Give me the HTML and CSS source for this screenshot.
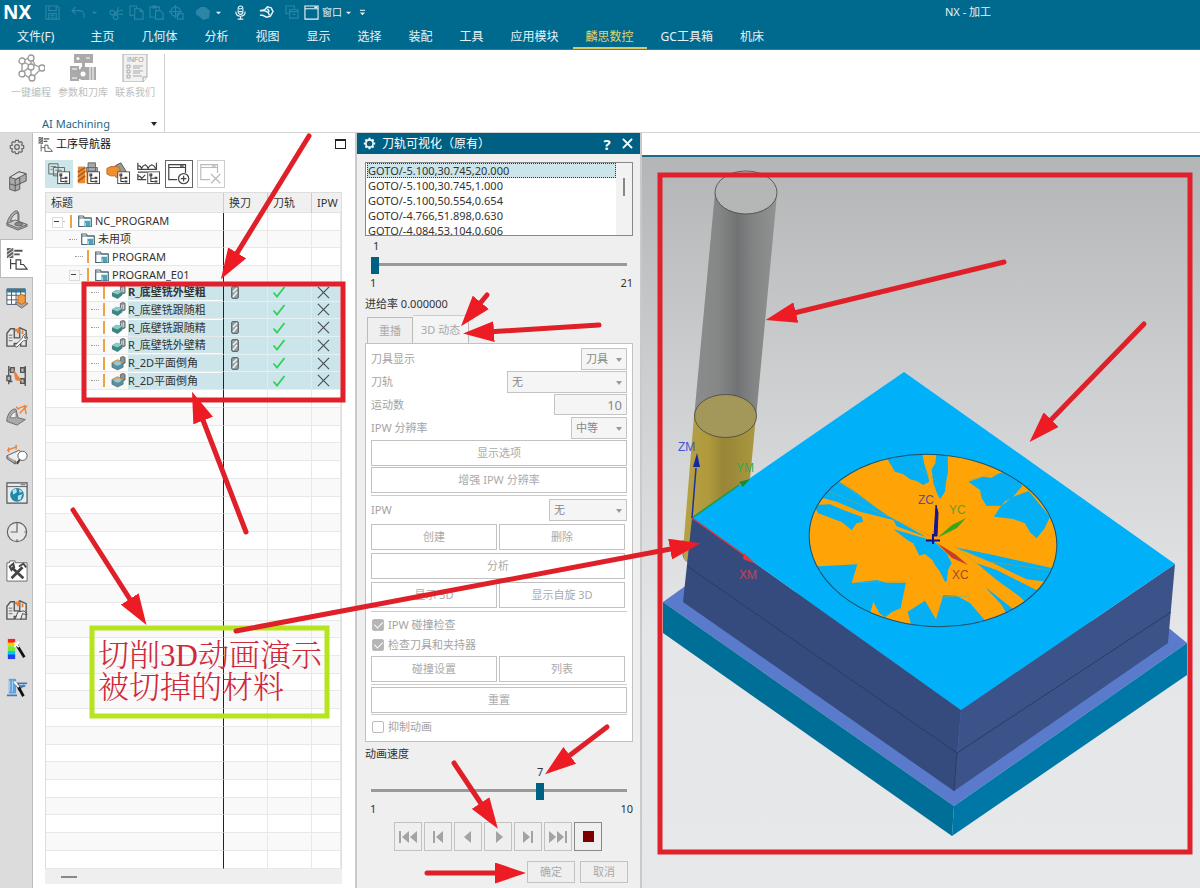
FILE: index.html
```html
<!DOCTYPE html>
<html lang="zh-CN">
<head>
<meta charset="utf-8">
<title>NX - 加工</title>
<link rel="stylesheet" href="styles.css">
</head>
<body>
<svg class="defs" aria-hidden="true">
  <symbol id="folder" viewBox="0 0 14 14"><path d="M.7 12.500V2h4.500l1.500 2h6.600v8.500z" fill="#fff" stroke="#4d6675" stroke-width="1.200"/><path d="M1 4h12" stroke="#4d6675"/><path d="M6 6.500h7v6H6z" fill="#8fd3df"/><path d="M7 8h5M8 10h4M8 12h4" stroke="#1b6d83"/></symbol>
  <symbol id="mill" viewBox="0 0 16 16"><path d="M10 1.500l3-1 2 1v7l-3 1-2-1z" fill="#8b9297" stroke="#4c555a" stroke-width=".8"/><path d="M11.500 3v5M13.500 2.500v5" stroke="#dde"/><path d="M1 8l5-3 6 2v4l-5 4-6-3z" fill="#3e8582"/><path d="M1 8l5-3 6 2-5 3z" fill="#8ccac3"/></symbol>
  <symbol id="chamfer" viewBox="0 0 16 16"><path d="M10 1.500l3-1 2 1v6l-3 1-2-1z" fill="#8b9297" stroke="#4c555a" stroke-width=".8"/><path d="M1 7l6-3 6 3v5l-6 3-6-3z" fill="#5a8e9e" stroke="#47606a" stroke-width=".6"/><path d="M1 7l6-3 6 3-6 3z" fill="#e7a05a"/><ellipse cx="7" cy="8" rx="3.500" ry="2" fill="#84d0df"/></symbol>
  <symbol id="tool" viewBox="0 0 8 13"><rect x=".7" y=".7" width="6.600" height="11.600" rx="1" fill="#9aa4a7" stroke="#4d5659"/><path d="M2 6l4-4M2 11l4-5" stroke="#f4f4f4" stroke-width="1.500"/></symbol>
  <symbol id="tick" viewBox="0 0 14 12"><path d="M1.500 6.500l3.500 4L12.500 1" fill="none" stroke="#2fd158" stroke-width="1.800"/></symbol>
  <symbol id="cross" viewBox="0 0 14 14"><path d="M1 1l12 12M13 1L1 13" stroke="#4a5256" stroke-width="1.300"/></symbol>
  <symbol id="tree" viewBox="0 0 14 14"><rect x=".6" y=".6" width="12.800" height="12.800" fill="#fff" stroke="#333"/><path d="M3 3h2v2H3zM4 5v6h4M4 7.500h4" fill="none" stroke="#333" stroke-width="1.100"/><path d="M8 6h3v2.500H8zM8 10h3v2.200H8z" fill="#444"/></symbol>
  <symbol id="opnav" viewBox="0 0 24 24"><path d="M1 0h7v11H1z" fill="#666"/><path d="M1 4l6-4M1 8l7-5M2 11l6-4" stroke="#eee"/><path d="M9 2h9v2H9zM9 6h6v2H9z" fill="#555"/><path d="M5 12v11M5 17h6M11 23v-10h5v5h3l4 5z" fill="#fff" stroke="#444" stroke-width="1.300"/></symbol>
  <symbol id="machine" viewBox="0 0 24 24"><path d="M1 22V8l4-5h4v10h6V2l7 3v17h-6v-3H9v3z" fill="#e8e8e8" stroke="#555" stroke-width="1.500"/><path d="M3 10h4M3 13h4M3 16h4" stroke="#666"/><path d="M10 3h2v3h-2zM13 2h2v6h-3V5zM17 5h2v4h-2z" fill="#e77c32"/></symbol>
</svg>

<div class="app">
  <header class="top">
    <div class="titlebar">
      <strong class="logo">NX</strong>
      <div class="quick">
        <button class="q dim" aria-label="保存"><svg viewBox="0 0 16 16"><path d="M1 1h12l2 2v12H1zM4 1v5h8V1M4 15V9h8v6M6 11h4M6 13h4"/></svg></button>
        <button class="q dim gap" aria-label="撤消"><svg viewBox="0 0 16 16"><path d="M5 2L1 6l4 4M1 6h8q6 0 5 8"/></svg></button>
        <button class="q tri dim" aria-label="撤消选项"><svg viewBox="0 0 8 8"><path class="f" d="M1 3h6L4 6z"/></svg></button>
        <button class="q dim gap" aria-label="剪切"><svg viewBox="0 0 16 16"><circle cx="3.500" cy="8" r="2.500"/><circle cx="7" cy="13" r="2.500"/><path d="M6 8l9-3M8 11L10 2M6 9l9 1"/></svg></button>
        <button class="q dim" aria-label="复制"><svg viewBox="0 0 16 16"><path d="M5 11H1V1h7v3M6 4h6l3 3v8H6zM12 4v3h3"/></svg></button>
        <button class="q dim" aria-label="粘贴"><svg viewBox="0 0 16 16"><path d="M6 13H1V2h10v3M4 1h4v2H4zM7 6h5l3 3v6H7z"/></svg></button>
        <button class="q dim" aria-label="特征"><svg viewBox="0 0 16 16"><circle cx="7" cy="7" r="5"/><path d="M7 0v14M0 7h14M9 9h6v6H9z"/></svg></button>
        <button class="q dim gap" aria-label="渲染"><svg viewBox="0 0 16 16"><path class="f" d="M1 6l5-4 5 0 5 4-1 8-6 2-5-4-3-2z"/></svg></button>
        <button class="q tri" aria-label="渲染选项"><svg viewBox="0 0 8 8"><path class="f" d="M1 3h6L4 6z"/></svg></button>
        <button class="q gap" aria-label="语音"><svg viewBox="0 0 16 16"><rect x="5.500" y="1" width="5" height="9" rx="2.500"/><path d="M3 7q0 5 5 5t5-5M8 12v3M5 15h6M6 4h4M6 7h4"/></svg></button>
        <button class="q gap" aria-label="触控"><svg viewBox="0 0 16 16"><path d="M1 11h3l4 2 4-1 3-5-2-4-4-1-3 3-5 1h5l4 2 1 3M9 4l2 3" stroke-width="1.600"/></svg></button>
        <button class="q dim gap" aria-label="层叠"><svg viewBox="0 0 16 16"><path d="M4 9H1V1h9v3M5 5h9v9H5zM5 7h9M8 10h3"/></svg></button>
        <button class="q win" aria-label="窗口"><svg viewBox="0 0 16 16"><path d="M1 1h14v14H1zM1 4h14M11 2.500h3"/></svg><span>窗口</span><svg class="small" viewBox="0 0 8 8"><path class="f" d="M1 3h6L4 6z"/></svg></button>
        <button class="q tri" aria-label="更多"><svg viewBox="0 0 8 8"><path d="M1 1.500h6"/><path class="f" d="M1 4h6L4 7z"/></svg></button>
      </div>
      <h1>NX - 加工</h1>
    </div>
    <nav class="menu" aria-label="主菜单">
      <button class="file">文件(F)</button><button>主页</button><button>几何体</button><button>分析</button><button>视图</button><button>显示</button><button>选择</button><button>装配</button><button>工具</button><button>应用模块</button><button class="active">麟思数控</button><button>GC工具箱</button><button>机床</button>
    </nav>
  </header>

  <section class="ribbon" aria-label="AI Machining">
    <div class="ribgroup">
      <div class="ribitems">
        <button><svg viewBox="0 0 28 28" fill="#fff" stroke="#999" stroke-width="1.300"><path d="M5 7l9-4 4 8 7 3-11 11-9-6 9-7-9-5M14 3v22M5 19V7"/><circle cx="5" cy="7" r="3"/><circle cx="14" cy="4" r="3"/><circle cx="14" cy="13" r="3"/><circle cx="25" cy="14" r="3"/><circle cx="5" cy="20" r="3"/><circle cx="15" cy="24" r="3"/></svg>一键编程</button>
        <button><svg viewBox="0 0 28 28" fill="#aaa"><path d="M5 0h19v9H5z"/><path d="M13 9h3v5h-3zM1 12h9v15H1zM12 13h15v13H12z"/><circle cx="14" cy="20" r="6"/><circle cx="14" cy="20" r="2.500" fill="#fff"/><circle cx="9" cy="4.500" r="1.500" fill="#fff"/><path d="M17 4h4M3 15h5M3 24h5M21 12v15M24 12v15" stroke="#fff"/></svg>参数和刀库</button>
        <button><svg viewBox="0 0 28 28" fill="#f1f1f1" stroke="#aaa"><path d="M2 0h24v23l-4 5H2z"/><text x="6" y="8" font-family="Liberation Sans" font-size="7" fill="#999" stroke="none">INFO</text><path d="M6 11h3v3H6zM6 16h3v3H6zM6 21h3v3H6zM12 12h10M12 14h7M12 17h10M12 19h7M12 22h9M22 28v-5h4"/></svg>联系我们</button>
      </div>
      <div class="riblabel"><span>AI Machining</span><i class="caret"></i></div>
    </div>
  </section>

  <main class="work">
    <nav class="rail" aria-label="资源条">
      <button class="first" aria-label="设置"><svg viewBox="0 0 24 24" fill="none" stroke="#666" stroke-width="1.800"><path d="M10 2h4l1 3 3-1 2 2-1 3 3 1v4l-3 1 1 3-2 2-3-1-1 3h-4l-1-3-3 1-2-2 1-3-3-1v-4l3-1-1-3 2-2 3 1z"/><circle cx="12" cy="12" r="3.500"/></svg></button>
      <button aria-label="装配导航器"><svg viewBox="0 0 24 24" stroke="#555"><path d="M4 8l10-6 8 2v8l-7 3v6l-5 2-6-2z" fill="#aaa"/><path d="M4 8l10-6 8 2-11 6z" fill="#ddd"/><path d="M4 15l6 2 5-2M11 10l4-2v7M10 10v13" fill="none"/></svg></button>
      <button aria-label="约束导航器"><svg viewBox="0 0 24 24" stroke="#666"><path d="M1 15C3 8 9 1 12 2q3 1 2 12l9 3v2l-10 4-12-5z" fill="#aaa"/><path d="M5 13q2-7 8-9v9z" fill="#ddd"/><path d="M1 16l9-4 13 5-10 4z" fill="#ccc"/><ellipse cx="14" cy="16.500" rx="4.500" ry="2" fill="#888"/></svg></button>
      <button class="active" aria-label="工序导航器"><svg viewBox="0 0 24 24"><use href="#opnav"/></svg></button>
      <button aria-label="机床工序"><svg viewBox="0 0 24 24"><path d="M1 2h20v17H1z" fill="#fff" stroke="#456"/><path d="M1 4h20" stroke="#357c9a" stroke-width="4"/><path d="M1 9h20M1 14h20M6 4v15M11 4v15M16 4v15" stroke="#456"/><path d="M10 18l6-3 8 3-7 5z" fill="#aaa" stroke="#666"/><path d="M13 10l4-2 4 2v7l-4 2-4-2z" fill="#f39b42" stroke="#c46a16"/></svg></button>
      <button aria-label="机床设置"><svg viewBox="0 0 24 24"><use href="#machine"/><path d="M9 22l9-9a4 4 0 0 1 5-4l-3 3 1 2 3-2a4 4 0 0 1-5 4l-7 7z" fill="#fff" stroke="#555"/></svg></button>
      <button aria-label="加工特征"><svg viewBox="0 0 24 24" fill="none" stroke="#555" stroke-width="1.500"><path d="M3 1v20M21 1v22M3 5h4M3 18h4M17 5h4M17 18h4"/><path d="M5 3h4v5H5zM1 12h4v5H1zM16 3h4v5h-4zM16 15h4v5h-4z" fill="#bbb"/><path d="M9 7l7 10-5-1zM10 11l3 5" stroke="#e58343" fill="#e58343"/></svg></button>
      <button aria-label="零件检测"><svg viewBox="0 0 24 24"><path d="M1 16C3 8 8 4 11 6l2 9 8 2-9 6-11-4z" fill="#aaa" stroke="#666"/><path d="M4 15q2-5 7-7v7z" fill="#eee" stroke="#777"/><path d="M13 5l8-3M20 1l2 10M15 10l8-8M11 3l3 3" stroke="#ed8130" stroke-width="1.500"/></svg></button>
      <button aria-label="测量"><svg viewBox="0 0 24 24"><path d="M1 14l13-6 8 5-12 9z" fill="#eee" stroke="#555"/><path d="M1 14v3l9 6v-4" fill="#aaa" stroke="#555"/><path d="M1 8l11-4M3 5v5M11 2v5" stroke="#ed8130" stroke-width="1.500"/><circle cx="18" cy="14" r="5" fill="#fff" stroke="#555"/><path d="M15 18l-3 5" stroke="#444" stroke-width="2"/></svg></button>
      <button aria-label="浏览器"><svg viewBox="0 0 24 24"><path d="M1 1h22v22H1z" fill="#e7edef" stroke="#555" stroke-width="1.300"/><path d="M1 5h22M16 3h5" stroke="#555"/><circle cx="12" cy="14" r="7.500" fill="#2387aa"/><path d="M7 9l4-2 1 4-4 3zM13 15l5-2-2 6-3 1zM14 8l4 2-3 2z" fill="#bce4ef"/></svg></button>
      <button aria-label="历史记录"><svg viewBox="0 0 24 24" fill="#e8e8e8" stroke="#666" stroke-width="1.300"><circle cx="12" cy="12" r="10.500"/><path d="M12 1v11H5M12 20v2M20 12h2" fill="none"/></svg></button>
      <button aria-label="工具"><svg viewBox="0 0 24 24"><path d="M1 3h3V1h6v2h13v20H1z" fill="#fff" stroke="#666"/><path d="M6 20L18 8M6 8l13 12" stroke="#444" stroke-width="3"/><path d="M4 7l4-3 1 4-3 3zM14 7l5-3 3 4" fill="none" stroke="#444" stroke-width="2"/></svg></button>
      <button aria-label="机床驱动"><svg viewBox="0 0 24 24"><use href="#machine"/><path d="M10 22l3-8 7-1 3 4-5-1-2 6z" fill="#eee" stroke="#444"/></svg></button>
      <button aria-label="颜色"><svg viewBox="0 0 24 24"><path d="M2 1h8v5H2z" fill="#f22"/><path d="M2 5h8v4H2z" fill="#fc0"/><path d="M2 9h8v5H2z" fill="#7e2"/><path d="M2 14h8v5H2z" fill="#0ce"/><path d="M2 18h8v5H2z" fill="#24e"/><path d="M12 8l8 13" stroke="#111" stroke-width="3"/><path d="M9 5l5 5M9 10l5-6" stroke="#fff" stroke-width="2"/></svg></button>
      <button aria-label="分析样式"><svg viewBox="0 0 24 24"><path d="M3 2h8v16H3z" fill="#5da2dc"/><path d="M1 20h11M11 7h12M12 10h9M13 14l7-5" stroke="#4779b7" stroke-width="2"/><path d="M4 4v12M7 4v12" stroke="#b5dcf5"/><path d="M12 8l7 13" stroke="#111" stroke-width="3"/><path d="M9 5l5 6" stroke="#fff" stroke-width="2"/></svg></button>
    </nav>

    <section class="navigator">
      <div class="navtitle"><svg viewBox="0 0 24 24"><use href="#opnav"/></svg><h2>工序导航器</h2><button class="max" aria-label="最大化"></button></div>
      <div class="navtools">
        <button class="on" aria-label="程序顺序视图"><svg viewBox="0 0 28 28"><path d="M3 3h10v11H3zM8 7h12v9H8z" fill="#d7e3e5" stroke="#566"/><path d="M5 6h6M5 9h2M10 10h7" stroke="#677"/><use href="#tree" x="12" y="11" width="14" height="14"/></svg></button>
        <button aria-label="机床视图"><svg viewBox="0 0 28 28"><path d="M2 6h8v18H2z" fill="#e88a34"/><path d="M2 12l8-5M2 17l8-6M2 22l8-6" stroke="#a85615" stroke-width="1.500"/><path d="M13 2h8v9h-8zM11 7h12v5H11z" fill="#a9a9a9" stroke="#666"/><path d="M11 12h4v12h-4z" fill="#eda044"/><use href="#tree" x="12" y="11" width="14" height="14"/></svg></button>
        <button aria-label="几何视图"><svg viewBox="0 0 28 28"><path d="M10 5l6-3 8 13-8 5z" fill="#999" stroke="#555"/><path d="M1 8l4-2h6v-1l4 3v7l-4 3-1-2H5l-4-2z" fill="#ee8f32" stroke="#bd641b"/><use href="#tree" x="12" y="11" width="14" height="14"/></svg></button>
        <button aria-label="加工方法视图"><svg viewBox="0 0 28 28"><path d="M2 2v7h20V2M2 5q3 0 4 3 1-3 4-4 2 1 3 4 1-3 4-4 3 1 4 4M2 12h10M2 14v6h9M2 16q3 0 4 3l4-4" fill="none" stroke="#444" stroke-width="1.300"/><use href="#tree" x="12" y="11" width="14" height="14"/></svg></button>
        <button class="box" aria-label="添加列"><svg viewBox="0 0 28 28" fill="none" stroke="#444" stroke-width="1.300"><path d="M12 20H3V4h18v9M3 7h18M15 5.500h4"/><circle cx="19" cy="19" r="5.500"/><path d="M16 19h6M19 16v6"/></svg></button>
        <button class="box off" aria-label="删除列"><svg viewBox="0 0 28 28" fill="none" stroke="#bbb" stroke-width="1.300"><path d="M13 20H3V4h18v9M3 7h18M15 5.500h4M14 14l10 10M24 14L14 24"/></svg></button>
      </div>
      <div class="tablewrap">
        <table class="ops">
          <colgroup><col><col class="c2"><col class="c3"><col class="c4"></colgroup>
          <thead><tr><th>标题</th><th>换刀</th><th>刀轨</th><th>IPW</th></tr></thead>
          <tbody id="rows">
            <tr><td><div class="n l0"><i class="tog"></i><b class="bar"></b><svg><use href="#folder"/></svg><span>NC_PROGRAM</span></div></td><td></td><td></td><td></td></tr>
            <tr><td><div class="n lu"><i class="dots"></i><svg><use href="#folder"/></svg><span>未用项</span></div></td><td></td><td></td><td></td></tr>
            <tr><td><div class="n l1"><i class="dots"></i><b class="bar"></b><svg><use href="#folder"/></svg><span>PROGRAM</span></div></td><td></td><td></td><td></td></tr>
            <tr><td><div class="n l1"><i class="tog"></i><b class="bar"></b><svg><use href="#folder"/></svg><span>PROGRAM_E01</span></div></td><td></td><td></td><td></td></tr>
            <tr class="sel cur"><td><div class="n l2"><i class="dots"></i><b class="bar"></b><svg><use href="#mill"/></svg><span>R_底壁铣外壁粗</span></div></td><td><svg class="t"><use href="#tool"/></svg></td><td><svg class="k"><use href="#tick"/></svg></td><td><svg class="x"><use href="#cross"/></svg></td></tr>
            <tr class="sel"><td><div class="n l2"><i class="dots"></i><b class="bar"></b><svg><use href="#mill"/></svg><span>R_底壁铣跟随粗</span></div></td><td></td><td><svg class="k"><use href="#tick"/></svg></td><td><svg class="x"><use href="#cross"/></svg></td></tr>
            <tr class="sel"><td><div class="n l2"><i class="dots"></i><b class="bar"></b><svg><use href="#mill"/></svg><span>R_底壁铣跟随精</span></div></td><td><svg class="t"><use href="#tool"/></svg></td><td><svg class="k"><use href="#tick"/></svg></td><td><svg class="x"><use href="#cross"/></svg></td></tr>
            <tr class="sel"><td><div class="n l2"><i class="dots"></i><b class="bar"></b><svg><use href="#mill"/></svg><span>R_底壁铣外壁精</span></div></td><td><svg class="t"><use href="#tool"/></svg></td><td><svg class="k"><use href="#tick"/></svg></td><td><svg class="x"><use href="#cross"/></svg></td></tr>
            <tr class="sel"><td><div class="n l2"><i class="dots"></i><b class="bar"></b><svg><use href="#chamfer"/></svg><span>R_2D平面倒角</span></div></td><td><svg class="t"><use href="#tool"/></svg></td><td><svg class="k"><use href="#tick"/></svg></td><td><svg class="x"><use href="#cross"/></svg></td></tr>
            <tr class="sel"><td><div class="n l2"><i class="dots"></i><b class="bar"></b><svg><use href="#chamfer"/></svg><span>R_2D平面倒角</span></div></td><td></td><td><svg class="k"><use href="#tick"/></svg></td><td><svg class="x"><use href="#cross"/></svg></td></tr>
          </tbody>
        </table>
      </div>
      <div class="hscroll"><i></i></div>
    </section>

    <section class="dialog" aria-label="刀轨可视化">
      <div class="dlgtitle"><svg viewBox="0 0 16 16" fill="none" stroke="#fff"><circle cx="8" cy="8" r="4.500" stroke-width="2"/><path d="M8 1v2M8 13v2M1 8h2M13 8h2M3 3l2 2M11 11l2 2M13 3l-2 2M3 13l2-2" stroke-width="2.500"/></svg><h2>刀轨可视化（原有）</h2><button aria-label="帮助"><b>?</b></button><button aria-label="关闭"><svg viewBox="0 0 12 12"><path d="M1 1l10 10M11 1L1 11" stroke="#fff" stroke-width="2"/></svg></button></div>
      <div class="dlgbody">
        <div class="list"><ul><li class="hit">GOTO/-5.100,30.745,20.000</li><li>GOTO/-5.100,30.745,1.000</li><li>GOTO/-5.100,50.554,0.654</li><li>GOTO/-4.766,51.898,0.630</li><li>GOTO/-4.084,53.104,0.606</li></ul><div class="vscroll"><i></i></div></div>
        <div class="slider"><div class="val"><output>1</output></div><input type="range" min="1" max="21" value="1" aria-label="刀轨位置"><div class="ends"><span>1</span><span>21</span></div></div>
        <p class="feed">进给率 0.000000</p>
        <div class="tabs" role="tablist"><button role="tab">重播</button><button role="tab" class="active" aria-selected="true">3D 动态</button></div>
        <div class="panel">
          <div class="group tight">
            <div>
              <div class="field"><label for="f1">刀具显示</label><div class="select w45"><select id="f1"><option>刀具</option></select></div></div>
              <div class="field"><label for="f2">刀轨</label><div class="select w120"><select id="f2"><option>无</option></select></div></div>
              <div class="field"><label for="f3">运动数</label><input id="f3" class="num" type="text" value="10"></div>
              <div class="field"><label for="f4">IPW 分辨率</label><div class="select w56"><select id="f4"><option>中等</option></select></div></div>
            </div>
            <button class="btn">显示选项</button>
            <button class="btn">增强 IPW 分辨率</button>
          </div>
          <div class="group loose">
            <div class="field"><label for="f5">IPW</label><div class="select w78"><select id="f5"><option>无</option></select></div></div>
            <div class="pair"><button class="btn">创建</button><button class="btn">删除</button></div>
            <div class="pair"><button class="btn">分析</button></div>
            <div class="pair"><button class="btn">显示 3D</button><button class="btn">显示自旋 3D</button></div>
          </div>
          <div class="group tight">
            <div><label class="check"><input type="checkbox" checked>IPW 碰撞检查</label><label class="check"><input type="checkbox" checked>检查刀具和夹持器</label></div>
            <div class="pair"><button class="btn">碰撞设置</button><button class="btn">列表</button></div>
          </div>
          <div class="group"><button class="btn">重置</button></div>
          <div class="group"><label class="check"><input type="checkbox">抑制动画</label></div>
        </div>
        <p class="speed">动画速度</p>
        <div class="slider"><div class="val" style="padding-left:63.4%"><output>7</output></div><input type="range" min="1" max="10" value="7" aria-label="动画速度"><div class="ends"><span>1</span><span>10</span></div></div>
        <div class="play">
          <button aria-label="到开头"><svg viewBox="0 0 20 14"><path d="M1 1h2v12H1zM11 1v12L4 7zM19 1v12l-7-6z"/></svg></button>
          <button aria-label="上一步"><svg viewBox="0 0 20 14"><path d="M5 1h2v12H5zM15 1v12L8 7z"/></svg></button>
          <button aria-label="反向播放"><svg viewBox="0 0 20 14"><path d="M13 1v12L6 7z"/></svg></button>
          <button aria-label="播放"><svg viewBox="0 0 20 14"><path d="M8 1v12l7-6z"/></svg></button>
          <button aria-label="下一步"><svg viewBox="0 0 20 14"><path d="M5 1v12l7-6zM13 1h2v12h-2z"/></svg></button>
          <button aria-label="到结尾"><svg viewBox="0 0 20 14"><path d="M1 1v12l7-6zM9 1v12l7-6zM17 1h2v12h-2z"/></svg></button>
          <button class="stop" aria-label="停止"><i></i></button>
        </div>
        <div class="actions"><button>确定</button><button>取消</button></div>
      </div>
    </section>

    <section class="viewport" aria-label="3D 视图">
      <div class="vphead"></div>
      <svg class="scene" viewBox="642 157 558 731" preserveAspectRatio="xMinYMin slice">
        <defs>
          <linearGradient id="sky" x1="0" y1="0" x2="0" y2="1"><stop offset="0" stop-color="#b4b5b7"/><stop offset=".3" stop-color="#cdced0"/><stop offset=".65" stop-color="#e4e6e8"/><stop offset="1" stop-color="#e6e8ea"/></linearGradient>
          <linearGradient id="steel"><stop offset="0" stop-color="#8c8c8c"/><stop offset=".3" stop-color="#858686"/><stop offset=".52" stop-color="#717273"/><stop offset=".7" stop-color="#828383"/><stop offset="1" stop-color="#929292"/></linearGradient>
          <linearGradient id="brass"><stop offset="0" stop-color="#b6a146"/><stop offset=".35" stop-color="#b09a3c"/><stop offset=".55" stop-color="#988537"/><stop offset="1" stop-color="#ab983f"/></linearGradient>
          <clipPath id="disc"><ellipse cx="933" cy="540.500" rx="124" ry="86" transform="rotate(4 933 540.500)"/></clipPath>
        </defs>
        <rect x="642" y="157" width="558" height="731" fill="url(#sky)"/>
        <path d="M715 192L694 418h62l21-224z" fill="url(#steel)"/>
        <ellipse cx="746" cy="192.500" rx="31" ry="21.500" fill="#b5b6b6" stroke="#444" stroke-width=".8"/>
        <path d="M694 416L683 550q0 10 7 12h52l14-146z" fill="url(#brass)"/>
        <ellipse cx="725.500" cy="416" rx="31" ry="21.500" fill="#a3975a" stroke="#444" stroke-width=".8"/>
        <path d="M683 540v15q1 6 6 7" fill="none" stroke="#555" stroke-width=".8"/>
        <path d="M663 602l28-20 479 47 17 14-233 163z" fill="#5a7bcb"/>
        <path d="M663 602v31l289 203 2-30z" fill="#006f97"/>
        <path d="M954 806l233-163v32L952 836z" fill="#0078a7"/>
        <path d="M692 518l-9 84 271 189 7-81z" fill="#364b7d"/>
        <path d="M961 710l214-146-7 79-214 148z" fill="#3c5389"/>
        <path d="M687 566l270 187 214-141M957 753l-3 38" fill="none" stroke="#29395f" stroke-width=".9"/>
        <path d="M904 372l271 192-214 146-269-192z" fill="#00b1fa"/>
        <g clip-path="url(#disc)">
          <path d="M800 445h270v190H800z" fill="#ffa407"/>
          <g transform="translate(780 420) scale(.33333)" fill="#05aff4">
            <path d="M315 105L345 155l25 8 20 15 20 5 20 12 18-10-6-25-9-28-8-42z"/>
            <path d="M470 95l-4 35-11 18 5 42 12 32 8 16 15-23 3-28 6-32-1-60z"/>
            <path d="M565 185l35 25 5 25 15 23 25-1 20 1 10-14 20-9 32-37-35-48-38 11-20 12-25-3z"/>
            <path d="M680 245l18-14 48-18 64 77-16 35-24 30-20-18-15-27-35-13-58-7 18-28z"/>
            <path d="M170 180l60 38 55 42 35 25 120 67-90-33-10-19-100-25-70-30-55-15z"/>
            <path d="M100 255l50-2 40 17 55 20 5 15-20 5-15 20-30-24-70-26z"/>
            <path d="M340 328l120 34 40 38 15 30-11 20-4 35h-5l-15-30-15-20-8-15-22-18-17 5-18-37-15-8z"/>
            <path d="M525 382l115 23 200 45v40l-100-12-100-48z"/>
            <path d="M590 430l60 20 130 65-30 45-30-30-70-50z"/>
            <path d="M615 500l100 80-30 10-20-35z"/>
            <path d="M90 440l142-7-17 57 75-10 30 8h58l-8 37-8 40-25 10-22 17-17-12-18-35-8 30v60l-180-110z"/>
            <path d="M383 575l52-33 18 31 15 25 22-73 40 2 40 22 60 70-120 40-110-20z"/>
          </g>
          <g stroke="#8da968" stroke-width="1" stroke-dasharray="1 1" fill="none"><path d="M830 492l57 24 46 21M837 481l50 34M955 547l35 15 60 8M960 550l43 35M970 480l25-7M853 583l53-2M940 597l30-1M915 465l20 15"/></g>
        </g>
        <ellipse cx="933" cy="540.500" rx="124" ry="86" transform="rotate(4 933 540.500)" fill="none" stroke="#16506d"/>
        <path d="M692 518l47-33" stroke="#159b3d" stroke-width="1.500"/><path d="M739 482l11-3-7 8z" fill="#168b35"/>
        <path d="M692 518l4-50" stroke="#1d329b" stroke-width="1.500"/><path d="M697 453l-4 14h7z" fill="#1228a5"/>
        <path d="M692 518l55 39" stroke="#d9333d" stroke-width="1.500"/><path d="M744 553l12 11-13-5z" fill="#df3838"/>
        <path d="M934 536l2-31 2 8-1 23z" fill="#171393" stroke="#171393"/>
        <path d="M937 538l15-13 14-7-9 10z" fill="#39a51c"/>
        <path d="M937 543l18 11 13 11-16-7z" fill="#c34031"/>
        <path d="M926 540.500h14M933 534v10" stroke="#19108b" stroke-width="2"/>
        <g class="axis"><text x="678" y="451" fill="#4156cf">ZM</text><text x="736" y="472" fill="#35a64d">YM</text><text x="739" y="579" fill="#c24458">XM</text><text x="918" y="504" fill="#6049a1">ZC</text><text x="949" y="514" fill="#669d28">YC</text><text x="952" y="579" fill="#a4492f">XC</text></g>
      </svg>
    </section>
  </main>

  <svg class="marks" width="1200" height="888" aria-hidden="true">
    <defs><marker id="head" markerUnits="userSpaceOnUse" markerWidth="32" markerHeight="21" refX="6" refY="10.500" orient="auto"><path d="M0 0l31 10.500L0 21z" fill="#ed1c24"/></marker></defs>
    <path class="frame" d="M84 284h259v116H84zM660 175h530v677H660z"/>
    <path class="green" d="M92 628h235v88H92z"/>
    <g class="arrows">
      <path d="M309 136L234 258"/><path d="M246 532L201 415"/><path d="M73 510L133 604"/><path d="M236 631L676 548"/><path d="M487 295L477 307"/><path d="M599 325L488 332"/><path d="M1004 262L790 314"/><path d="M1144 324L1047 424"/><path d="M607 727L565 759"/><path d="M454 763L484 808"/><path d="M427 873H501"/>
    </g>
  </svg>
  <p class="note">切削3D动画演示<br>被切掉的材料</p>
</div>
<script src="script.js"></script>
</body>
</html>
```
FILE: styles.css
```css
* { box-sizing: border-box; }
body { margin: 0; font: 11px/16px "Noto Sans", "Noto Sans CJK SC", sans-serif; color: #333; background: #fff; }
button, input, select { font: inherit; color: inherit; margin: 0; padding: 0; border: 0; background: none; }
button { display: flex; align-items: center; justify-content: center; white-space: nowrap; }
h1, h2, p, ul { margin: 0; padding: 0; font-size: inherit; font-weight: 400; list-style: none; }
svg { display: block; flex: none; }
.defs { position: absolute; width: 0; height: 0; }
.app { position: relative; display: flex; flex-direction: column; height: 100vh; min-height: 888px; overflow: hidden; }

/* Title bar and menu */
.top { background: #00698e; color: #e6f3f7; border-bottom: 1px solid #327f9c; }
.titlebar { display: grid; grid-template-columns: 40px 1fr 255px; height: 24px; align-items: center; }
.logo { padding-left: 3px; font: 700 19px/24px "Noto Sans", sans-serif; color: #fff; }
.quick { display: flex; align-items: center; padding-left: 2px; }
.q { width: 20px; height: 20px; }
.q svg { width: 15px; height: 15px; fill: none; stroke: #e6f3f7; stroke-width: 1.2px; }
.q .f { fill: #e6f3f7; stroke: none; }
.q.tri { width: 12px; }
.q.tri svg, .q .small { width: 7px; height: 7px; }
.q.dim svg { stroke: #2b86a5; }
.q.dim .f { fill: #2b86a5; }
.q.gap { margin-left: 6px; }
.q.win { width: auto; gap: 3px; padding: 0 4px 0 2px; font-size: 10px; }
.menu { display: flex; height: 25px; gap: 1px; padding-left: 4px; font-size: 12px; }
.menu button { padding: 3px 13px 0; border-bottom: 2px solid transparent; }
.menu .file { margin-right: 9px; }
.menu .active { color: #e2d36c; border-bottom-color: #d9c766; }

/* Ribbon */
.ribbon { display: flex; height: 83px; background: #fff; border-bottom: 1px solid #d4d4d4; }
.ribgroup { display: flex; flex-direction: column; justify-content: space-between; margin: 4px 0 0; padding: 0 5px 0 7px; border-right: 1px solid #d0d0d0; }
.ribitems { display: flex; gap: 3px; }
.ribitems button { flex-direction: column; gap: 3px; min-width: 48px; color: #bdbdbd; font-size: 10px; line-height: 14px; }
.ribitems svg { width: 28px; height: 28px; }
.riblabel { display: flex; justify-content: center; align-items: center; position: relative; padding: 0 14px 1px 0; color: #1d6682; line-height: 14px; }
.caret { position: absolute; right: 2px; border: 3px solid transparent; border-top: 4px solid #222; border-bottom: 0; }

.work { display: flex; flex: 1; min-height: 0; }

/* Resource rail */
.rail { width: 33px; background: #dcdcdc; border-right: 1px solid #bdbdbd; }
.rail button { width: 33px; height: 39px; }
.rail .first { height: 28px; }
.rail svg { width: 22px; height: 22px; }
.rail .first svg { width: 16px; height: 16px; }
.rail .active { background: #fff; border: 1px solid #bbb; border-right: 0; }

/* Operation navigator */
.navigator { display: flex; flex-direction: column; width: 322px; padding: 0 13px 4px 12px; background: #fff; }
.navtitle { display: flex; align-items: center; height: 22px; gap: 3px; margin: 0 -9px 0 -7px; color: #111; }
.navtitle svg { width: 15px; height: 15px; }
.navtitle h2 { flex: 1; }
.max { width: 11px; height: 10px; margin-right: 5px; border: 1px solid #222; border-top-width: 2px; }
.navtools { display: flex; gap: 2px; height: 37px; align-items: center; }
.navtools button { width: 28px; height: 28px; }
.navtools svg { width: 26px; height: 26px; }
.navtools .on { background: #cde6ea; }
.navtools .box { border: 1px solid #666; }
.navtools .off { border-color: #ccc; margin-left: 2px; }
.tablewrap { flex: 1; min-height: 0; border: 1px solid #ddd; border-bottom: 0; }
.ops { width: 100%; height: 100%; border-collapse: separate; border-spacing: 0; table-layout: fixed; }
.c2 { width: 44px; }
.c3 { width: 44px; }
.c4 { width: 29px; }
.ops th { height: 20px; padding: 0 5px; text-align: left; font-weight: 400; background: #f0f0f0; border-right: 1px solid #ccc; border-bottom: 1px solid #e2e2e2; }
.ops th:last-child { border-right: 0; }
.ops td { padding: 0; height: 17px; line-height: 16px; border-bottom: 1px solid #e8e8e8; border-right: 1px solid #e8e8e8; }
.ops td:first-child { border-right: 1px solid #222; }
.ops tbody tr:nth-child(even) td { background: #f9f9f9; }
.ops tbody .sel td:not(:first-child) { background: #cbe5ea; border-bottom-color: #e3f1f3; }
.n { display: flex; align-items: center; height: 16px; white-space: nowrap; }
.n svg { width: 14px; height: 14px; margin-right: 3px; }
.l0 { padding-left: 6px; }
.lu { padding-left: 17px; }
.l1 { padding-left: 23px; }
.l2 { padding-left: 39px; }
.tog { position: relative; width: 18px; height: 9px; background: linear-gradient(#444, #444) 2px 4px / 5px 1px no-repeat, linear-gradient(#bbb, #bbb) 10px 4px / 3px 1px no-repeat; }
.tog::before { content: ""; position: absolute; width: 9px; height: 9px; border: 1px solid #ddd; }
.dots { width: 18px; padding-left: 6px; }
.dots::before { content: ""; display: block; width: 8px; border-top: 1px dotted #999; }
.bar { width: 8px; height: 13px; border-left: 2px solid #eda43c; }
.sel .n span { flex: 1; background: #cbe5ea; }
.sel .n svg { width: 15px; height: 15px; margin-right: 2px; }
.cur .n span { font-weight: 700; }
.t { width: 8px; height: 13px; margin-left: 7px; }
.k { width: 14px; height: 12px; margin-left: 4px; }
.x { width: 13px; height: 13px; margin-left: 5px; }
.hscroll { display: flex; align-items: center; height: 15px; padding-left: 16px; background: #efefef; }
.hscroll i { width: 16px; height: 2px; background: #888; }

/* Tool path dialog */
.dialog { display: flex; flex-direction: column; width: 287px; background: #efefef; border: solid #c9c9c9; border-width: 0 2px; }
.dlgtitle { display: flex; align-items: center; gap: 6px; height: 21px; padding: 0 6px 0 6px; background: #006084; color: #fff; font-size: 12px; }
.dlgtitle svg { width: 13px; height: 13px; }
.dlgtitle h2 { flex: 1; }
.dlgtitle button { width: 14px; height: 20px; }
.dlgtitle button svg { width: 11px; height: 11px; }
.dlgtitle b { font-size: 15px; }
.dlgbody { padding: 8px 7px 0 8px; }
.list { display: flex; height: 74px; border: 1px solid #888; background: #fff; overflow: hidden; }
.list ul { flex: 1; padding: 0 0 0 1px; line-height: 15px; }
.list li { border: 1px solid transparent; height: 15px; line-height: 13px; }
.list .hit { background: #cbe5ea; border: 1px dotted #333; }
.vscroll { width: 16px; background: #f2f2f2; padding: 15px 0 0 7px; }
.vscroll i { display: block; width: 2px; height: 18px; background: #888; }
.slider { padding: 2px 0 0 6px; }
.val { padding-left: 2px; line-height: 15px; height: 17px; }
.slider input { display: block; width: calc(100% - 6px); height: 20px; appearance: none; background: linear-gradient(#999, #999) 0 8px / 100% 3px no-repeat; }
.slider input::-webkit-slider-thumb { appearance: none; width: 8px; height: 17px; background: #006084; }
.ends { display: flex; justify-content: space-between; }
.ends span:first-child { margin-left: -1px; }
.feed { padding-top: 5px; }
.tabs { display: flex; align-items: flex-end; height: 31px; padding-left: 2px; }
.tabs button { height: 26px; padding: 0 11px; border: 1px solid #bbb; border-bottom: 0; color: #aaa; }
.tabs .active { height: 28px; padding: 0 8px; border-left: 0; border-top-color: #ccc; background: #f4f4f4; }
.panel { padding-bottom: 3px; background: #fff; border: 1px solid #c2c2c2; color: #a3a3a3; }
.group { display: flex; flex-direction: column; gap: 2px; margin: 0 5px; padding: 2px 0 1px; border-bottom: 1px solid #ccc; }
.group:last-child { border-bottom: 0; }
.group.tight { gap: 1px; padding: 3px 0 2px; }
.group.loose { gap: 3px; padding: 2px 0 3px; }
.field { display: flex; align-items: center; justify-content: space-between; height: 23px; }
.select { position: relative; height: 22px; }
.select::after { content: ""; position: absolute; right: 5px; top: 10px; border: 3px solid transparent; border-top: 4px solid #999; border-bottom: 0; pointer-events: none; }
.select select, .num { width: 100%; height: 22px; padding: 0 4px; border: 1px solid #c4c4c4; background: #f5f5f5; color: #888; appearance: none; border-radius: 0; }
.w45 { width: 46px; }
.w56 { width: 56px; }
.w78 { width: 78px; }
.w120 { width: 120px; }
.field .num { width: 73px; height: 21px; text-align: right; font-size: 13px; }
.btn { flex: 1; height: 26px; min-height: 26px; border: 1px solid #c2c2c2; background: #fff; color: #aaa; }
.pair { display: flex; gap: 2px; padding-right: 2px; }
.check { display: flex; align-items: center; gap: 4px; height: 20px; padding-left: 1px; }
.check input { width: 12px; height: 12px; border: 1px solid #bbb; border-radius: 2px; appearance: none; background: #fff; }
.check input:checked { position: relative; background: #b5b5b5; }
.check input:checked::after { content: ""; position: absolute; left: 3px; top: 0; width: 4px; height: 7px; border: solid #fff; border-width: 0 1px 1px 0; transform: rotate(45deg); }
.speed { padding-top: 4px; }
.play { display: flex; justify-content: center; gap: 2px; padding: 5px 2px 0 0; }
.play button { width: 28px; height: 29px; border: 1px solid #c2c2c2; }
.play svg { width: 20px; height: 14px; fill: #a3a3a3; }
.play .stop { border-color: #888; }
.stop i { width: 11px; height: 11px; background: #7d0000; }
.actions { display: flex; justify-content: flex-end; gap: 5px; padding: 10px 5px 0 0; }
.actions button { width: 48px; height: 22px; border: 1px solid #c2c2c2; color: #aaa; }

/* Graphics window */
.viewport { display: flex; flex: 1; min-width: 0; flex-direction: column; background: #e6e8ea; }
.vphead { height: 24px; background: #fff; border-bottom: 2px solid #1e6c8a; }
.scene { flex: 1; width: 100%; min-height: 0; }
.axis { font: 12px "Liberation Sans", sans-serif; }

/* Red call-outs over the window */
.marks { position: absolute; left: 0; top: 0; pointer-events: none; }
.frame { fill: none; stroke: #e0202a; stroke-width: 5px; }
.green { fill: none; stroke: #b5e51f; stroke-width: 5px; }
.arrows { fill: none; stroke: #df2029; stroke-width: 5px; stroke-linecap: round; }
.arrows path { marker-end: url(#head); }
.note { position: absolute; left: 98px; top: 640px; color: #cf2b3a; font: 300 31px/32px "Liberation Serif", "Noto Serif CJK SC", "Noto Sans CJK SC", serif; white-space: nowrap; }
```
FILE: script.js
```javascript
// Fill the rest of the operation grid with empty striped rows.
const body = document.getElementById("rows");
while (body.rows.length < 37) {
  const row = body.insertRow();
  for (let i = 0; i < 4; i++) row.insertCell();
}
```
